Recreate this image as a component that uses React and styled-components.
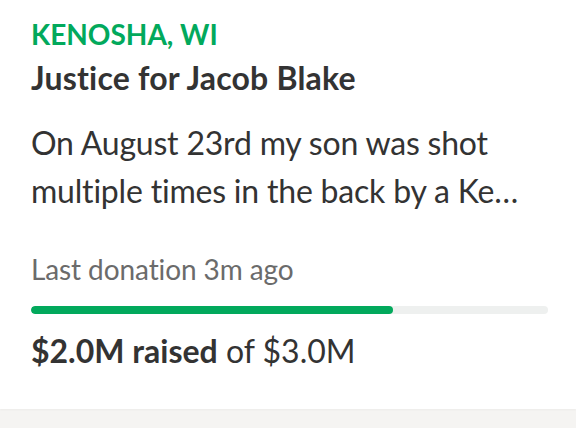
import React from "react";
import styled, { createGlobalStyle } from "styled-components";

const Global = createGlobalStyle`
  html, body { margin: 0; padding: 0; background: #f5f4f2; }
  body {
    font-family: Lato, "Open Sans", sans-serif;
    font-variant-ligatures: no-common-ligatures;
  }
  #root { min-height: 428px; }
`;

const Card = styled.article`
  background: #fff;
  padding: 16px 28px 38px 31px;
  box-shadow: 0 1px 2px rgba(0, 0, 0, 0.04);
`;

const Location = styled.div`
  color: #02a95c;
  font-weight: 700;
  font-size: 28px;
  line-height: 36px;
  text-transform: uppercase;
`;

const Title = styled.h2`
  margin: 6px 0 0;
  color: #333;
  font-weight: 700;
  font-size: 32px;
  line-height: 40px;
  letter-spacing: 0.2px;
`;

const Excerpt = styled.p`
  margin: 21px 0 0;
  color: #333;
  font-size: 32px;
  line-height: 48px;
  letter-spacing: -0.2px;
`;

const Meta = styled.div`
  margin-top: 36px;
  color: #6b6b6b;
  font-size: 28px;
  line-height: 36px;
  letter-spacing: -0.1px;
`;

const Track = styled.div`
  margin-top: 19px;
  height: 8px;
  border-radius: 4px;
  background: #eef0ef;
  overflow: hidden;
`;

const Fill = styled.div`
  height: 100%;
  border-radius: 4px;
  background: #02a95c;
`;

const Raised = styled.div`
  margin-top: 17px;
  color: #333;
  font-size: 32px;
  line-height: 40px;
  strong { font-weight: 700; }
`;

export default function App() {
  const raised = 2.0;
  const goal = 3.0;
  const pct = 70;
  return (
    <>
      <Global />
      <Card>
        <Location>Kenosha, WI</Location>
        <Title>Justice for Jacob Blake</Title>
        <Excerpt>
          On August 23rd my son was shot multiple times in the back by a Ke…
        </Excerpt>
        <Meta>Last donation 3m ago</Meta>
        <Track>
          <Fill style={{ width: `${pct}%` }} />
        </Track>
        <Raised>
          <strong>${raised.toFixed(1)}M raised</strong> of ${goal.toFixed(1)}M
        </Raised>
      </Card>
    </>
  );
}
